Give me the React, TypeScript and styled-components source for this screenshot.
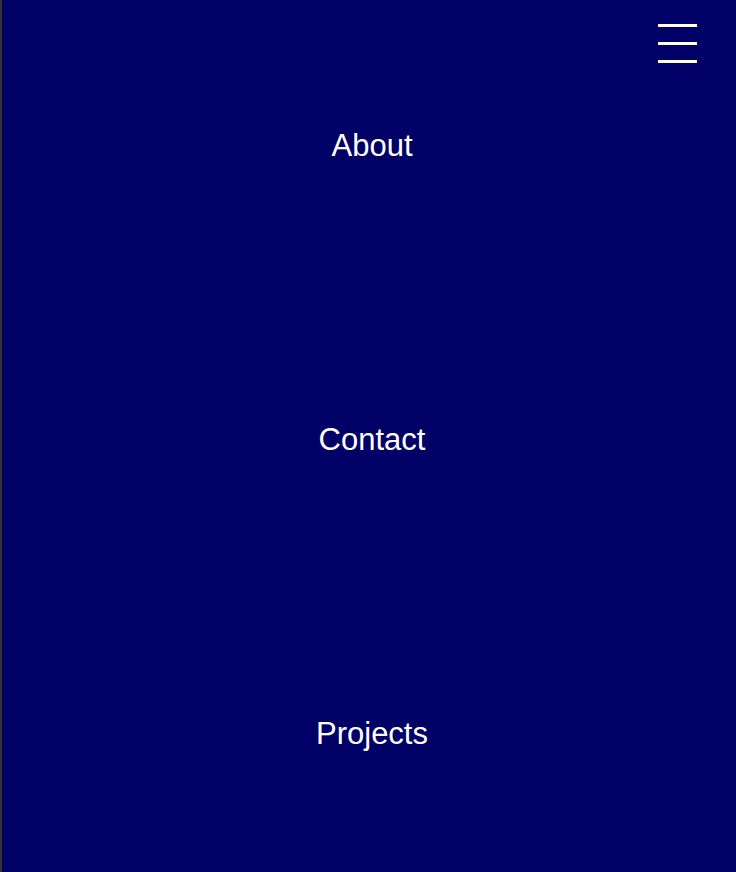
import React from "react";
import styled, { createGlobalStyle } from "styled-components";

const GlobalStyle = createGlobalStyle`
  html, body {
    margin: 0;
    padding: 0;
    background: #000066;
    overflow: hidden;
  }
  * { box-sizing: border-box; }
`;

const Page = styled.nav`
  position: relative;
  height: 100vh;
  overflow: hidden;
  background: #000066;
  border-left: 2px solid #333333;
  display: flex;
  flex-direction: column;
  font-family: "Liberation Sans", Arial, sans-serif;
`;

const MenuItem = styled.a`
  flex: 0 0 294px;
  display: flex;
  align-items: center;
  justify-content: center;
  padding: 0 0 2px 6px;
  color: #ffffff;
  font-size: 31px;
  text-decoration: none;
`;

const MenuButton = styled.button`
  position: absolute;
  top: 24px;
  right: 39px;
  width: 39px;
  padding: 0;
  border: none;
  background: transparent;
  display: flex;
  flex-direction: column;
  gap: 15px;
  cursor: pointer;
`;

const Bar = styled.span`
  display: block;
  height: 3px;
  width: 100%;
  background: #ffffff;
`;

export default function App() {
  return (
    <>
      <GlobalStyle />
      <Page>
        <MenuButton aria-label="Menu">
          <Bar />
          <Bar />
          <Bar />
        </MenuButton>
        <MenuItem href="#about">About</MenuItem>
        <MenuItem href="#contact">Contact</MenuItem>
        <MenuItem href="#projects">Projects</MenuItem>
      </Page>
    </>
  );
}
